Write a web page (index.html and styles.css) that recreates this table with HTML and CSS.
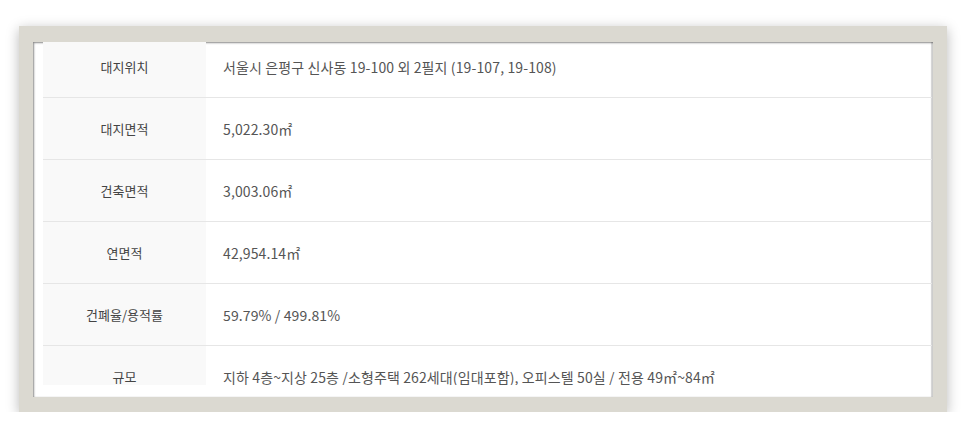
FILE: index.html
```html
<!DOCTYPE html>
<html>
<head>
  <meta charset="UTF-8">
  <title>사업개요</title>
  <link rel="stylesheet" href="styles.css">
</head>
<body>
  <div class="frame">
    <div class="sheet">
      <div class="viewport">
        <table class="summary">
          <tr>
            <th>대지위치</th>
            <td>서울시 은평구 신사동 19-100 외 2필지 (19-107, 19-108)</td>
          </tr>
          <tr>
            <th>대지면적</th>
            <td>5,022.30㎡</td>
          </tr>
          <tr>
            <th>건축면적</th>
            <td>3,003.06㎡</td>
          </tr>
          <tr>
            <th>연면적</th>
            <td>42,954.14㎡</td>
          </tr>
          <tr>
            <th>건폐율/용적률</th>
            <td>59.79% / 499.81%</td>
          </tr>
          <tr>
            <th>규모</th>
            <td>지하 4층~지상 25층 /소형주택 262세대(임대포함), 오피스텔 50실 / 전용 49㎡~84㎡</td>
          </tr>
        </table>
      </div>
    </div>
  </div>
</body>
</html>
```

FILE: styles.css
```css
body {
  margin: 0;
  background: #ffffff;
  font-family: "Noto Sans CJK KR", "Noto Sans", sans-serif;
}

.frame {
  margin: 26px 0 0 19px;
  width: 928px;
  height: 386px;
  box-sizing: border-box;
  padding: 16px 14px 15px 14px;
  background: #dbd9d1;
  box-shadow: 0 3px 12px rgba(0, 0, 0, 0.28);
}

.sheet {
  height: 100%;
  box-sizing: border-box;
  padding: 0 1px 12px 10px;
  background: #ffffff;
  box-shadow: inset 1px 1px 2px rgba(0, 0, 0, 0.45), inset -2px 0 1px rgba(0, 0, 0, 0.18);
}

.viewport {
  height: 100%;
  overflow: hidden;
}

.summary {
  width: 100%;
  margin-top: -6px;
  border-collapse: collapse;
}

.summary th {
  width: 163px;
  height: 61px;
  padding: 0;
  background: #f9f9f9;
  color: #444;
  font-size: 13px;
  font-weight: normal;
  text-align: center;
  border-bottom: 1px solid #e6e6e6;
}

.summary td {
  padding: 0 0 0 17px;
  color: #555;
  font-size: 14px;
  letter-spacing: 0.12px;
  border-bottom: 1px solid #e6e6e6;
}
```
